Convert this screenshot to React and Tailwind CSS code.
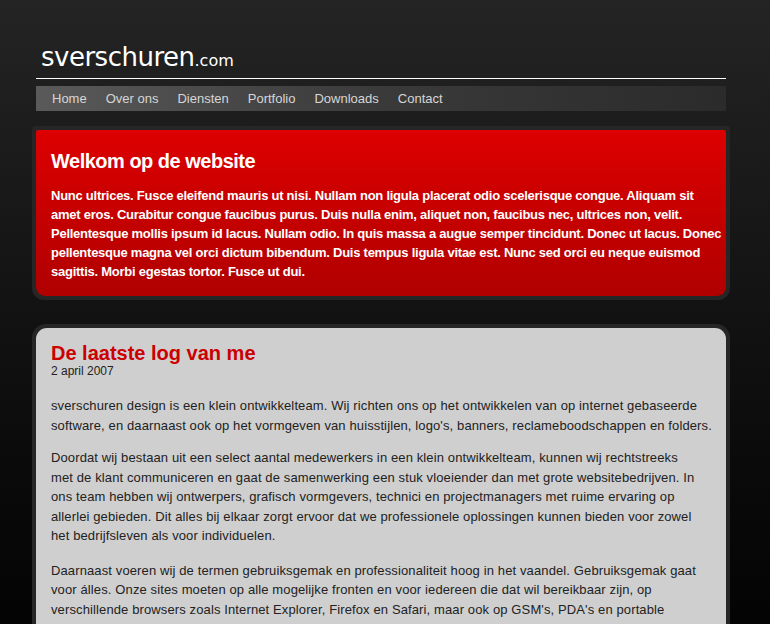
import React from "react";

const font = { fontFamily: '"Liberation Sans", Arial, sans-serif' };

const Lines = ({ lines }) =>
  lines.map((l, i) => (
    <span key={i} className="block whitespace-nowrap">
      {l}
    </span>
  ));

export default function App() {
  const nav = ["Home", "Over ons", "Diensten", "Portfolio", "Downloads", "Contact"];
  return (
    <div
      className="h-[624px] w-full overflow-hidden bg-gradient-to-b from-[#242424] to-[#040404]"
      style={font}
    >
      <div className="ml-[36px] w-[690px] pt-[40px]">
        <div className="border-b border-white pl-[5px] leading-[35px] text-white">
          <span className="text-[26px]" style={{ fontFamily: '"DejaVu Sans", sans-serif', letterSpacing: "-0.5px" }}>sverschuren</span>
          <span className="text-[16px]" style={{ fontFamily: '"DejaVu Sans", sans-serif' }}>.com</span>
        </div>
        <nav className="mt-[7px] flex h-[25px] items-center gap-[19px] bg-gradient-to-r from-[#5a5a5a] via-[#3a3a3a] to-[#2b2b2b] pl-[16px] text-[13px] text-[#d6d6d6]">
          {nav.map((n) => (
            <span key={n}>{n}</span>
          ))}
        </nav>
        <div className="mt-[15px] -mx-[4px] rounded-b-[12px] rounded-t-[3px] bg-[#262626] p-[4px]">
          <div className="rounded-b-[9px] rounded-t-[2px] bg-gradient-to-b from-[#dd0000] to-[#b00000] px-[15px] pt-[18px] pb-[15px] text-white">
            <h1 className="text-[20px] font-bold leading-[26px] tracking-[-0.5px]">Welkom op de website</h1>
            <p className="mt-[12px] text-[13px] font-bold leading-[19px] tracking-[-0.25px]">
              <Lines
                lines={[
                  "Nunc ultrices. Fusce eleifend mauris ut nisi. Nullam non ligula placerat odio scelerisque congue. Aliquam sit",
                  "amet eros. Curabitur congue faucibus purus. Duis nulla enim, aliquet non, faucibus nec, ultrices non, velit.",
                  "Pellentesque mollis ipsum id lacus. Nullam odio. In quis massa a augue semper tincidunt. Donec ut lacus. Donec",
                  "pellentesque magna vel orci dictum bibendum. Duis tempus ligula vitae est. Nunc sed orci eu neque euismod",
                  "sagittis. Morbi egestas tortor. Fusce ut dui.",
                ]}
              />
            </p>
          </div>
        </div>
        <div className="mt-[24px] -mx-[4px] rounded-t-[14px] bg-[#262626] p-[4px]">
          <div className="rounded-t-[11px] bg-[#cfcfcf] px-[15px] pt-[14px] pb-[20px] text-[#222]">
            <h2 className="text-[20px] font-bold leading-[23px] text-[#cc0000]">De laatste log van me</h2>
            <div className="text-[12px] leading-[12px] text-[#222]">2 april 2007</div>
            <p className="mt-[19px] text-[13px] leading-[19.5px] tracking-[0.12px]">
              <Lines
                lines={[
                  "sverschuren design is een klein ontwikkelteam. Wij richten ons op het ontwikkelen van op internet gebaseerde",
                  "software, en daarnaast ook op het vormgeven van huisstijlen, logo's, banners, reclameboodschappen en folders.",
                ]}
              />
            </p>
            <p className="mt-[13px] text-[13px] leading-[19.5px] tracking-[0.12px]">
              <Lines
                lines={[
                  "Doordat wij bestaan uit een select aantal medewerkers in een klein ontwikkelteam, kunnen wij rechtstreeks",
                  "met de klant communiceren en gaat de samenwerking een stuk vloeiender dan met grote websitebedrijven. In",
                  "ons team hebben wij ontwerpers, grafisch vormgevers, technici en projectmanagers met ruime ervaring op",
                  "allerlei gebieden. Dit alles bij elkaar zorgt ervoor dat we professionele oplossingen kunnen bieden voor zowel",
                  "het bedrijfsleven als voor individuelen.",
                ]}
              />
            </p>
            <p className="mt-[15px] text-[13px] leading-[19.5px] tracking-[0.12px]">
              <Lines
                lines={[
                  "Daarnaast voeren wij de termen gebruiksgemak en professionaliteit hoog in het vaandel. Gebruiksgemak gaat",
                  "voor álles. Onze sites moeten op alle mogelijke fronten en voor iedereen die dat wil bereikbaar zijn, op",
                  "verschillende browsers zoals Internet Explorer, Firefox en Safari, maar ook op GSM's, PDA's en portable",
                  "apparaten.",
                ]}
              />
            </p>
          </div>
        </div>
      </div>
    </div>
  );
}
